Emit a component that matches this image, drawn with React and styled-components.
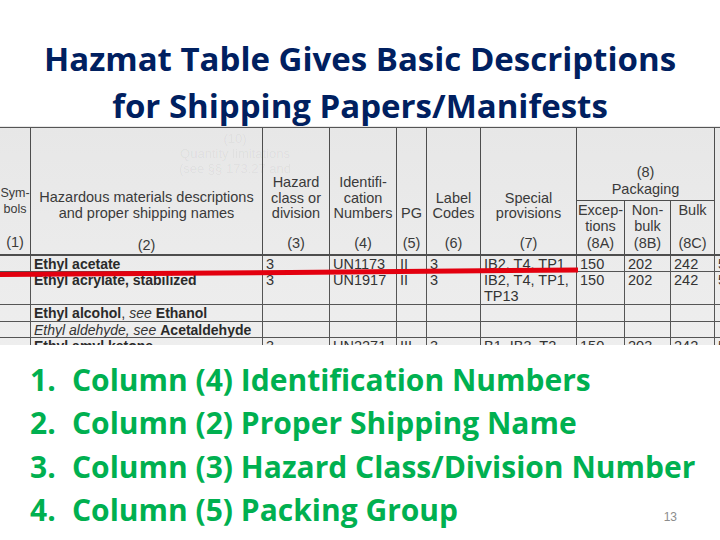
import React from 'react';
import styled, { createGlobalStyle } from 'styled-components';

const Global = createGlobalStyle`
  * { box-sizing: border-box; }
  body { margin: 0; background: #fff; }
`;

const Slide = styled.div`
  width: 720px;
  height: 540px;
  overflow: hidden;
  background: #fff;
  display: flex;
  flex-direction: column;
`;

const Title = styled.h1`
  margin: 0;
  height: 126px;
  padding-top: 35px;
  text-align: center;
  color: #002060;
  font-family: 'Open Sans', 'Noto Sans', sans-serif;
  font-weight: 700;
  font-size: 33px;
  line-height: 47px;
  font-variant-ligatures: none;
  white-space: nowrap;
`;

const Photo = styled.div`
  position: relative;
  height: 219px;
  flex-shrink: 0;
  overflow: hidden;
  background: linear-gradient(to bottom, #e7e7e7 0%, #ebebeb 55%, #eeeeee 100%);
  font-family: 'Liberation Sans', Arial, sans-serif;
  color: #333;
`;

const Table = styled.div`
  margin-top: 1px;
  border-top: 1px solid #555;
  display: grid;
  grid-template-columns: 31px 232px 67px 67px 30px 54px 96px 48px 46px 44px 40px;
  grid-template-rows: 73px 55px 16px 33px 17px 16px 30px;
`;

const HeadCell = styled.div`
  grid-row: ${p => p.$row};
  grid-column: ${p => p.$col};
  display: flex;
  flex-direction: column;
  align-items: center;
  justify-content: ${p => p.$justify || 'flex-end'};
  text-align: center;
  border-right: ${p => (p.$last ? 'none' : '1px solid #4d4d4d')};
  border-bottom: ${p => (p.$thin ? '1px' : '2px')} solid #4d4d4d;
  padding: ${p => p.$pad || '0 0 3px'};
  font-size: ${p => p.$size || '14.5px'};
  line-height: ${p => p.$lh || '15.5px'};
  color: #3a3a3a;
  white-space: nowrap;
`;

const ColNum = styled.div`
  margin-top: ${p => p.$gap || 0}px;
  font-size: 14.5px;
`;

const Cell = styled.div`
  border-right: ${p => (p.$last ? 'none' : '1px solid #555')};
  border-bottom: 1px solid #555;
  padding: 0 3px;
  font-size: 14.5px;
  line-height: 16px;
  color: #333;
  white-space: nowrap;
  overflow: hidden;
  b { font-size: 14px; color: #2a2a2a; }
  i { font-size: 14px; }
`;

const Ghost = styled.div`
  position: absolute;
  left: 165px;
  top: 5px;
  width: 140px;
  text-align: center;
  font-size: 13px;
  line-height: 15px;
  color: rgba(0, 0, 0, 0.05);
  pointer-events: none;
`;

const RedMark = styled.svg`
  position: absolute;
  left: 0;
  top: 0;
`;

const List = styled.ol`
  margin: 13px 0 0;
  padding: 0 0 0 30px;
  list-style: none;
  font-family: 'Open Sans', 'Noto Sans', sans-serif;
  font-weight: 700;
  font-size: 30px;
  line-height: 43.3px;
  color: #00b050;
  font-variant-ligatures: none;
`;

const Item = styled.li`
  display: flex;
  align-items: baseline;
  white-space: nowrap;
`;

const Num = styled.span`
  width: 42px;
  flex-shrink: 0;
`;

const PageNum = styled.span`
  margin-left: auto;
  margin-right: 43px;
  font-family: 'Liberation Sans', Arial, sans-serif;
  font-weight: 400;
  font-size: 12px;
  color: #8c8c8c;
`;

const rows = [
  [<b>Ethyl acetate</b>, '3', 'UN1173', 'II', '3', 'IB2, T4, TP1', '150', '202', '242', '5'],
  [<b>Ethyl acrylate, stabilized</b>, '3', 'UN1917', 'II', '3', <>IB2, T4, TP1,<br />TP13</>, '150', '202', '242', '5'],
  [<><b>Ethyl alcohol</b>, <i>see</i> <b>Ethanol</b></>, '', '', '', '', '', '', '', '', ''],
  [<><i>Ethyl aldehyde, see</i> <b>Acetaldehyde</b></>, '', '', '', '', '', '', '', '', ''],
  [<b>Ethyl amyl ketone</b>, '3', 'UN2271', 'III', '3', 'B1, IB3, T2', '150', '203', '242', '5'],
];

const points = [
  ['1.', 'Column (4) Identification Numbers'],
  ['2.', 'Column (2) Proper Shipping Name'],
  ['3.', 'Column (3) Hazard Class/Division Number'],
  ['4.', 'Column (5) Packing Group'],
];

export default function App() {
  return (
    <Slide>
      <Global />
      <Title>
        Hazmat Table Gives Basic Descriptions<br />for Shipping Papers/Manifests
      </Title>

      <Photo>
        <Table>
          <HeadCell $row="1 / 3" $col="1" $size="12.5px" $lh="16px" $pad="0 0 4px">
            <div>Sym-<br />bols</div>
            <ColNum $gap={17}>(1)</ColNum>
          </HeadCell>
          <HeadCell $row="1 / 3" $col="2" $lh="16px" $pad="0 0 1px">
            <div>Hazardous materials descriptions<br />and proper shipping names</div>
            <ColNum $gap={16}>(2)</ColNum>
          </HeadCell>
          <HeadCell $row="1 / 3" $col="3">
            <div>Hazard<br />class or<br />division</div>
            <ColNum $gap={14}>(3)</ColNum>
          </HeadCell>
          <HeadCell $row="1 / 3" $col="4">
            <div>Identifi-<br />cation<br />Numbers</div>
            <ColNum $gap={14}>(4)</ColNum>
          </HeadCell>
          <HeadCell $row="1 / 3" $col="5">
            <div>PG</div>
            <ColNum $gap={14}>(5)</ColNum>
          </HeadCell>
          <HeadCell $row="1 / 3" $col="6">
            <div>Label<br />Codes</div>
            <ColNum $gap={14}>(6)</ColNum>
          </HeadCell>
          <HeadCell $row="1 / 3" $col="7">
            <div>Special<br />provisions</div>
            <ColNum $gap={14}>(7)</ColNum>
          </HeadCell>
          <HeadCell $row="1" $col="8 / 11" $thin $lh="17px" $pad="0 0 2px">
            <div>(8)<br />Packaging</div>
          </HeadCell>
          <HeadCell $row="2" $col="8" $lh="16.5px">
            <div>Excep-<br />tions<br />(8A)</div>
          </HeadCell>
          <HeadCell $row="2" $col="9" $lh="16.5px">
            <div>Non-<br />bulk<br />(8B)</div>
          </HeadCell>
          <HeadCell $row="2" $col="10" $lh="16.5px" $justify="space-between" $pad="1px 0 3px">
            <div>Bulk</div>
            <div>(8C)</div>
          </HeadCell>
          <HeadCell $row="1 / 3" $col="11" $last />

          {rows.map((r, i) => (
            <React.Fragment key={i}>
              <Cell />
              {r.map((c, j) => (
                <Cell key={j} $last={j === r.length - 1}>{c}</Cell>
              ))}
            </React.Fragment>
          ))}
        </Table>

        <Ghost>
          (10)<br />Quantity limitations<br />(see §§ 173.27 and
        </Ghost>

        <RedMark width="720" height="219" viewBox="0 0 720 219">
          <path d="M0 148.5 L290 146.5 L578 144" stroke="#e3000f" strokeWidth="5" fill="none" />
        </RedMark>
      </Photo>

      <List>
        {points.map(([n, t], i) => (
          <Item key={n}>
            <Num>{n}</Num>
            <span>{t}</span>
            {i === points.length - 1 && <PageNum>13</PageNum>}
          </Item>
        ))}
      </List>
    </Slide>
  );
}
